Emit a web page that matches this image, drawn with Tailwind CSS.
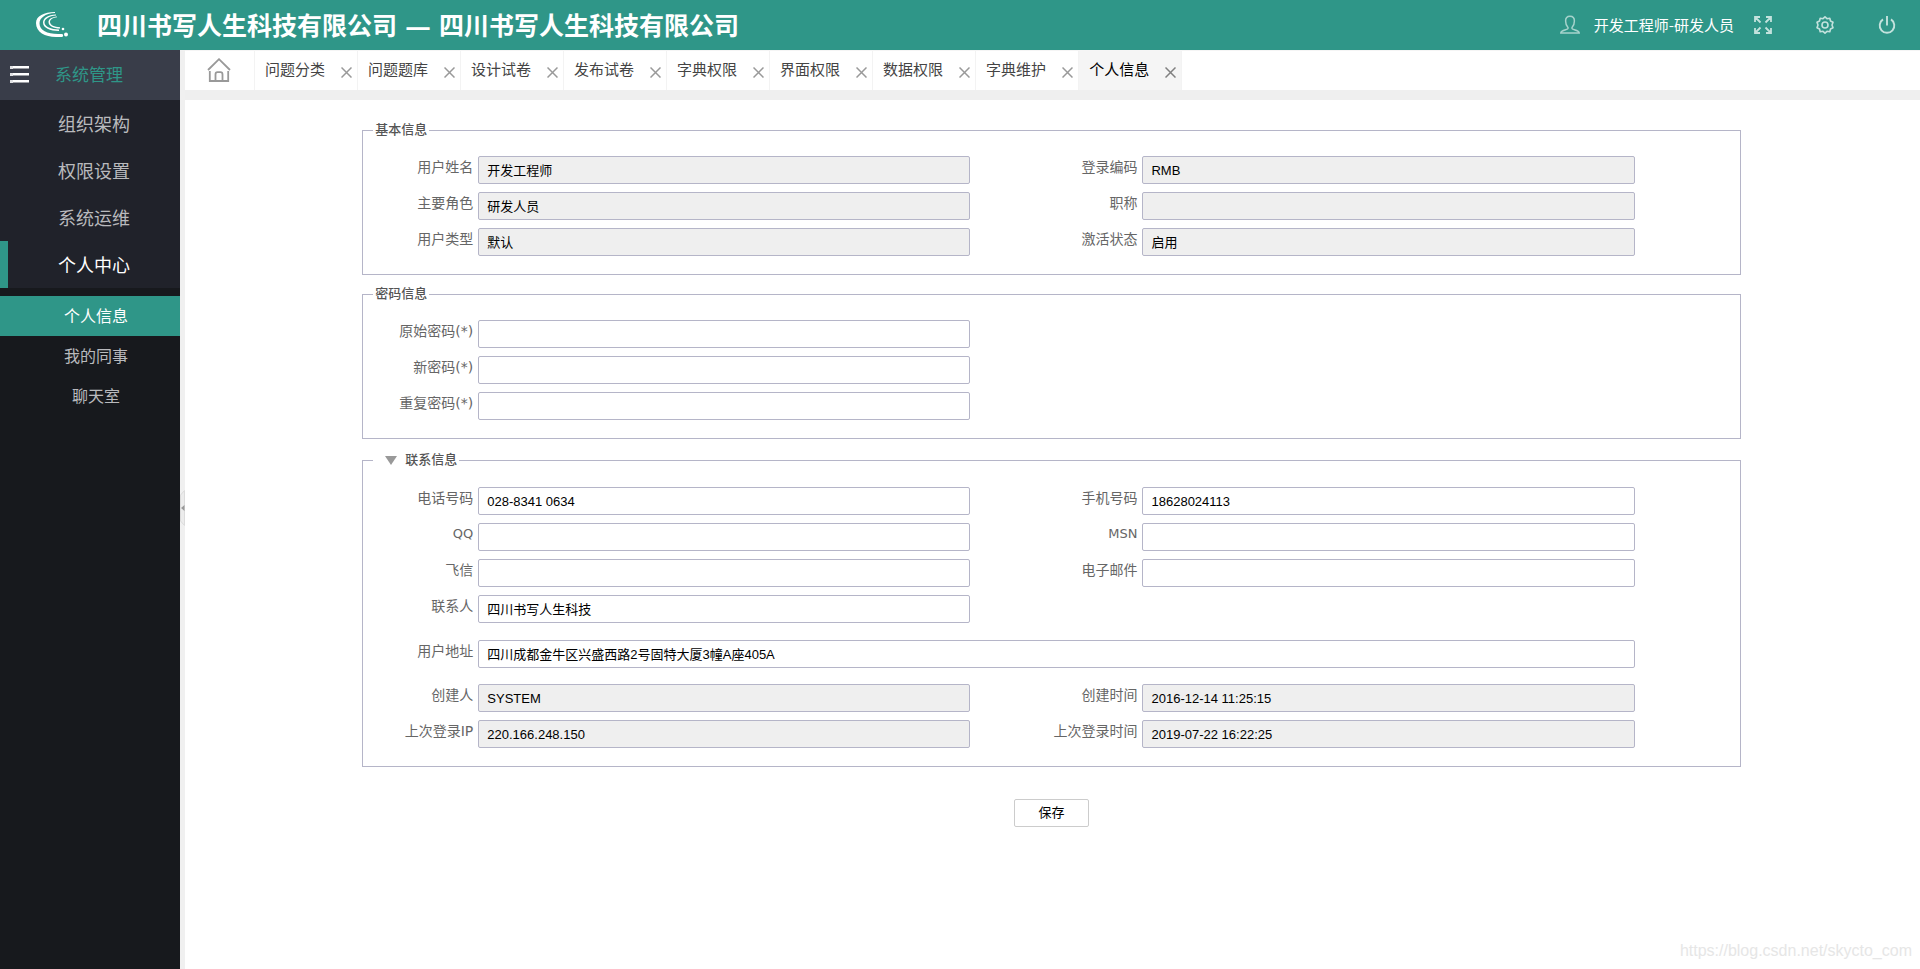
<!DOCTYPE html>
<html lang="zh-CN">
<head>
<meta charset="utf-8">
<meta name="viewport" content="width=device-width, initial-scale=1">
<title>个人信息</title>
<script src="https://cdn.jsdelivr.net/npm/@tailwindcss/browser@4"></script>
</head>
<body class="flex min-h-screen flex-col bg-white font-['Noto_Sans_CJK_SC',sans-serif]">

<header class="flex h-[50px] shrink-0 items-center bg-[#2f9688] pr-6 pl-9 text-white">
  <svg class="h-[26px] w-8 shrink-0" viewBox="0 0 32 26" fill="#fff" aria-hidden="true">
    <path d="M19 0C8 0 0 4 0 11c0 9 9 14 20 14h6c1.500 0 1.500-3 0-3h-4C11 22 3.500 18 3.500 11.500C3.500 6 9 1.500 19 1z"/>
    <path d="M20 2.500C12 3 7 6 7 10.500c0 5.500 7 8.500 16 8.500v-1.500C15 17.500 8.500 14.500 8.500 10.500C8.500 7 13 4 20 3.500z"/>
    <path d="M21 4.500c-5 .5-8.500 2.500-8.500 5.500c0 4 5 6.500 11.500 6.500v-1.300c-5.500 0-10-2.200-10-5.200c0-2.500 3-4.200 7-4.700z"/>
    <circle cx="27" cy="17" r="1.300"/><circle cx="30" cy="22.500" r="2"/>
  </svg>
  <h1 class="ml-[29px] font-['Noto_Sans','Noto_Sans_CJK_SC',sans-serif] text-[25px] leading-[50px] font-bold whitespace-nowrap">四川书写人生科技有限公司 <span class="mx-0.5">—</span> 四川书写人生科技有限公司</h1>
  <nav class="ml-auto flex items-center" aria-label="用户">
    <svg class="h-5 w-5" viewBox="0 0 20 20" fill="none" stroke="#a6d3cc" stroke-width="1.500" aria-hidden="true">
      <path d="M8 12.500C6.500 11 5.600 8.800 5.600 6C5.600 3 7.300 1.200 10 1.200S14.400 3 14.400 6c0 2.800-.9 5-2.400 6.500v1c0 1.200 7.200 1.500 7.200 4.500H.8c0-3 7.200-3.300 7.200-4.500z"/>
    </svg>
    <a href="#" class="ml-3.5 text-[15px] leading-5">开发工程师-研发人员</a>
    <button type="button" class="ml-5" aria-label="全屏">
      <svg class="block h-[18px] w-[18px]" viewBox="0 0 18 18" fill="none" stroke="#c3e2dd" stroke-width="1.800">
        <path d="M1 6V1h5M1.500 1.500L6.500 6.500M12 1h5v5M16.500 1.500L11.500 6.500M17 12v5h-5M16.500 16.500L11.500 11.500M6 17H1v-5M1.500 16.500L6.500 11.500"/>
      </svg>
    </button>
    <button type="button" class="ml-11" aria-label="设置">
      <svg class="block h-[18px] w-[18px]" viewBox="0 0 18 18" fill="none" stroke="#c3e2dd" stroke-width="1.600" stroke-linejoin="round">
        <path d="M9 .8L11 2.700L13.800 2.300L14.500 5L17 6.300L16 9L17 11.700L14.500 13L13.800 15.700L11 15.300L9 17.200L7 15.300L4.200 15.700L3.500 13L1 11.700L2 9L1 6.300L3.500 5L4.200 2.300L7 2.700z"/>
        <circle cx="9" cy="9" r="3"/>
      </svg>
    </button>
    <button type="button" class="ml-11" aria-label="退出">
      <svg class="block h-[18px] w-[18px]" viewBox="0 0 18 18" fill="none" stroke="#c3e2dd" stroke-width="1.900">
        <path d="M5 3.400A7.300 7.300 0 1 0 13 3.400M9 0v9.500"/>
      </svg>
    </button>
  </nav>
</header>

<div class="flex flex-1">
  <aside class="w-[180px] shrink-0 bg-[#17191d]">
    <div class="flex h-[50px] items-center bg-[#393d49] pb-0.5 pl-2.5">
      <button type="button" aria-label="收起菜单">
        <svg class="block h-5 w-5" viewBox="0 0 20 20" fill="#fff"><path d="M0 2h3v3H0zM0 9h3v3H0zM0 16h3v3H0z" opacity=".85"/><path d="M3 2h16v2.500H3zM3 9h16v2.500H3zM3 16h16v2.500H3z"/></svg>
      </button>
      <span class="ml-[25px] text-[17px] leading-6 text-[#2f9688]">系统管理</span>
    </div>
    <nav aria-label="系统管理">
      <div class="bg-[#20222a] text-center text-lg text-[#b9babd]">
        <a href="#" class="block border-l-8 border-transparent leading-[47px]">组织架构</a>
        <a href="#" class="block border-l-8 border-transparent leading-[47px]">权限设置</a>
        <a href="#" class="block border-l-8 border-transparent leading-[47px]">系统运维</a>
        <a href="#" class="block border-l-8 border-[#2f9688] leading-[47px] text-white">个人中心</a>
      </div>
      <div class="pt-2 text-center text-base text-[#b9babd]">
        <a href="#" class="block bg-[#2f9688] pb-0.5 pl-3 leading-[38px] text-white" aria-current="page">个人信息</a>
        <a href="#" class="block pb-0.5 pl-3 leading-[38px]">我的同事</a>
        <a href="#" class="block pb-0.5 pl-3 leading-[38px]">聊天室</a>
      </div>
    </nav>
  </aside>

  <div class="flex w-[5px] shrink-0 items-center bg-[#f0f0f0]">
    <button type="button" class="mb-[3px] flex h-9 w-full items-center justify-end" aria-label="折叠侧栏">
      <svg class="block h-9 w-[5px]" viewBox="0 0 5 36"><path d="M4.500 .5L.5 5v26l4 4.500z" fill="#ececec" stroke="#dcdcdc"/><path d="M4.500 15v6L1 18z" fill="#999"/></svg>
    </button>
  </div>

  <div class="flex min-w-0 flex-1 flex-col">
    <nav class="flex h-[50px] shrink-0 border-t border-b-10 border-t-[#f5f5f5] border-b-[#efefef] text-[15px] leading-9 whitespace-nowrap text-[#444]" aria-label="标签页">
      <a href="#" class="flex w-[70px] items-center justify-center border-r border-[#f3f3f3] pr-0.5 pb-0.5" aria-label="首页">
        <svg class="h-6 w-6" viewBox="0 0 24 24" fill="none" stroke="#999" stroke-width="1.800"><path d="M1 12L12 1.200L23 12M2.800 13v10h18.400V13M8.500 23v-6.500c0-1.600.7-2.300 2-2.300h3c1.300 0 2 .7 2 2.300V23"/></svg>
      </a>
      <div class="flex border-r border-[#f3f3f3] pr-[5px] pl-2.5"><a href="#">问题分类</a><button type="button" class="ml-4" aria-label="关闭问题分类"><svg class="mt-1 h-[11px] w-[11px]" viewBox="0 0 11 11" stroke="#999" stroke-width="1.500"><path d="M.5 .5l10 10M10.500 .5l-10 10"/></svg></button></div>
      <div class="flex border-r border-[#f3f3f3] pr-[5px] pl-2.5"><a href="#">问题题库</a><button type="button" class="ml-4" aria-label="关闭问题题库"><svg class="mt-1 h-[11px] w-[11px]" viewBox="0 0 11 11" stroke="#999" stroke-width="1.500"><path d="M.5 .5l10 10M10.500 .5l-10 10"/></svg></button></div>
      <div class="flex border-r border-[#f3f3f3] pr-[5px] pl-2.5"><a href="#">设计试卷</a><button type="button" class="ml-4" aria-label="关闭设计试卷"><svg class="mt-1 h-[11px] w-[11px]" viewBox="0 0 11 11" stroke="#999" stroke-width="1.500"><path d="M.5 .5l10 10M10.500 .5l-10 10"/></svg></button></div>
      <div class="flex border-r border-[#f3f3f3] pr-[5px] pl-2.5"><a href="#">发布试卷</a><button type="button" class="ml-4" aria-label="关闭发布试卷"><svg class="mt-1 h-[11px] w-[11px]" viewBox="0 0 11 11" stroke="#999" stroke-width="1.500"><path d="M.5 .5l10 10M10.500 .5l-10 10"/></svg></button></div>
      <div class="flex border-r border-[#f3f3f3] pr-[5px] pl-2.5"><a href="#">字典权限</a><button type="button" class="ml-4" aria-label="关闭字典权限"><svg class="mt-1 h-[11px] w-[11px]" viewBox="0 0 11 11" stroke="#999" stroke-width="1.500"><path d="M.5 .5l10 10M10.500 .5l-10 10"/></svg></button></div>
      <div class="flex border-r border-[#f3f3f3] pr-[5px] pl-2.5"><a href="#">界面权限</a><button type="button" class="ml-4" aria-label="关闭界面权限"><svg class="mt-1 h-[11px] w-[11px]" viewBox="0 0 11 11" stroke="#999" stroke-width="1.500"><path d="M.5 .5l10 10M10.500 .5l-10 10"/></svg></button></div>
      <div class="flex border-r border-[#f3f3f3] pr-[5px] pl-2.5"><a href="#">数据权限</a><button type="button" class="ml-4" aria-label="关闭数据权限"><svg class="mt-1 h-[11px] w-[11px]" viewBox="0 0 11 11" stroke="#999" stroke-width="1.500"><path d="M.5 .5l10 10M10.500 .5l-10 10"/></svg></button></div>
      <div class="flex border-r border-[#f3f3f3] pr-[5px] pl-2.5"><a href="#">字典维护</a><button type="button" class="ml-4" aria-label="关闭字典维护"><svg class="mt-1 h-[11px] w-[11px]" viewBox="0 0 11 11" stroke="#999" stroke-width="1.500"><path d="M.5 .5l10 10M10.500 .5l-10 10"/></svg></button></div>
      <div class="flex border-r border-[#f3f3f3] bg-[#f5f5f5] pr-[5px] pl-2.5 text-black"><a href="#" aria-current="page">个人信息</a><button type="button" class="ml-4" aria-label="关闭个人信息"><svg class="mt-1 h-[11px] w-[11px]" viewBox="0 0 11 11" stroke="#808080" stroke-width="1.500"><path d="M.5 .5l10 10M10.500 .5l-10 10"/></svg></button></div>
    </nav>

    <main class="flex-1 pt-5 pr-0.5">
      <form class="mx-auto flex w-4/5 flex-col gap-[9px] px-1 font-['DejaVu_Sans','Noto_Sans_CJK_SC',sans-serif] text-sm text-[#666]">
        <fieldset class="border border-[#b5b5c8] pr-12 pb-[18px]">
          <legend class="ml-2.5 px-0.5 text-[13px] leading-5 font-medium text-[#555]">基本信息</legend>
          <div class="grid grid-cols-2 gap-y-2 pt-4">
            <div class="flex pr-[57px]"><label for="name" class="w-[115px] shrink-0 pr-[5px] text-right leading-[22px]">用户姓名</label><input id="name" readonly value="开发工程师" class="h-7 min-w-0 flex-1 rounded-xs border border-[#b5b5c8] bg-[#efefef] px-2 pb-0.5 font-['Liberation_Sans','Noto_Sans_CJK_SC',sans-serif] text-[13px] text-black"></div>
            <div class="flex pr-[57px]"><label for="code" class="w-[115px] shrink-0 pr-[5px] text-right leading-[22px]">登录编码</label><input id="code" readonly value="RMB" class="h-7 min-w-0 flex-1 rounded-xs border border-[#b5b5c8] bg-[#efefef] px-2 font-['Liberation_Sans','Noto_Sans_CJK_SC',sans-serif] text-[13px] text-black"></div>
            <div class="flex pr-[57px]"><label for="role" class="w-[115px] shrink-0 pr-[5px] text-right leading-[22px]">主要角色</label><input id="role" readonly value="研发人员" class="h-7 min-w-0 flex-1 rounded-xs border border-[#b5b5c8] bg-[#efefef] px-2 pb-0.5 font-['Liberation_Sans','Noto_Sans_CJK_SC',sans-serif] text-[13px] text-black"></div>
            <div class="flex pr-[57px]"><label for="title" class="w-[115px] shrink-0 pr-[5px] text-right leading-[22px]">职称</label><input id="title" readonly class="h-7 min-w-0 flex-1 rounded-xs border border-[#b5b5c8] bg-[#efefef] px-2 text-[13px] text-black"></div>
            <div class="flex pr-[57px]"><label for="type" class="w-[115px] shrink-0 pr-[5px] text-right leading-[22px]">用户类型</label><input id="type" readonly value="默认" class="h-7 min-w-0 flex-1 rounded-xs border border-[#b5b5c8] bg-[#efefef] px-2 pb-0.5 font-['Liberation_Sans','Noto_Sans_CJK_SC',sans-serif] text-[13px] text-black"></div>
            <div class="flex pr-[57px]"><label for="state" class="w-[115px] shrink-0 pr-[5px] text-right leading-[22px]">激活状态</label><input id="state" readonly value="启用" class="h-7 min-w-0 flex-1 rounded-xs border border-[#b5b5c8] bg-[#efefef] px-2 pb-0.5 font-['Liberation_Sans','Noto_Sans_CJK_SC',sans-serif] text-[13px] text-black"></div>
          </div>
        </fieldset>

        <fieldset class="border border-[#b5b5c8] pr-12 pb-[18px]">
          <legend class="ml-2.5 px-0.5 text-[13px] leading-5 font-medium text-[#555]">密码信息</legend>
          <div class="grid w-1/2 gap-y-2 pt-4">
            <div class="flex pr-[57px]"><label for="old" class="w-[115px] shrink-0 pr-[5px] text-right leading-[22px]">原始密码(*)</label><input id="old" type="password" class="h-7 min-w-0 flex-1 rounded-xs border border-[#b5b5c8] bg-white px-2 text-[13px] text-black"></div>
            <div class="flex pr-[57px]"><label for="new" class="w-[115px] shrink-0 pr-[5px] text-right leading-[22px]">新密码(*)</label><input id="new" type="password" class="h-7 min-w-0 flex-1 rounded-xs border border-[#b5b5c8] bg-white px-2 text-[13px] text-black"></div>
            <div class="flex pr-[57px]"><label for="again" class="w-[115px] shrink-0 pr-[5px] text-right leading-[22px]">重复密码(*)</label><input id="again" type="password" class="h-7 min-w-0 flex-1 rounded-xs border border-[#b5b5c8] bg-white px-2 text-[13px] text-black"></div>
          </div>
        </fieldset>

        <fieldset class="border border-[#b5b5c8] pr-12 pb-[18px]">
          <legend class="ml-2.5 pr-0.5 text-[13px] leading-6 font-medium text-[#555]">
            <button type="button" class="flex items-center gap-2 pl-3" aria-expanded="true"><svg class="h-[9px] w-3" viewBox="0 0 12 9" fill="#999"><path d="M0 0h12L6 9z"/></svg>联系信息</button>
          </legend>
          <div class="grid grid-cols-2 gap-y-2 pt-[15px]">
            <div class="flex pr-[57px]"><label for="phone" class="w-[115px] shrink-0 pr-[5px] text-right leading-[22px]">电话号码</label><input id="phone" value="028-8341 0634" class="h-7 min-w-0 flex-1 rounded-xs border border-[#b5b5c8] bg-white px-2 font-['Liberation_Sans','Noto_Sans_CJK_SC',sans-serif] text-[13px] text-black"></div>
            <div class="flex pr-[57px]"><label for="mobile" class="w-[115px] shrink-0 pr-[5px] text-right leading-[22px]">手机号码</label><input id="mobile" value="18628024113" class="h-7 min-w-0 flex-1 rounded-xs border border-[#b5b5c8] bg-white px-2 font-['Liberation_Sans','Noto_Sans_CJK_SC',sans-serif] text-[13px] text-black"></div>
            <div class="flex pr-[57px]"><label for="qq" class="w-[115px] shrink-0 pr-[5px] text-right text-[13px] leading-[22px]">QQ</label><input id="qq" class="h-7 min-w-0 flex-1 rounded-xs border border-[#b5b5c8] bg-white px-2 text-[13px] text-black"></div>
            <div class="flex pr-[57px]"><label for="msn" class="w-[115px] shrink-0 pr-[5px] text-right text-[13px] leading-[22px]">MSN</label><input id="msn" class="h-7 min-w-0 flex-1 rounded-xs border border-[#b5b5c8] bg-white px-2 text-[13px] text-black"></div>
            <div class="flex pr-[57px]"><label for="fetion" class="w-[115px] shrink-0 pr-[5px] text-right leading-[22px]">飞信</label><input id="fetion" class="h-7 min-w-0 flex-1 rounded-xs border border-[#b5b5c8] bg-white px-2 text-[13px] text-black"></div>
            <div class="flex pr-[57px]"><label for="email" class="w-[115px] shrink-0 pr-[5px] text-right leading-[22px]">电子邮件</label><input id="email" type="email" class="h-7 min-w-0 flex-1 rounded-xs border border-[#b5b5c8] bg-white px-2 text-[13px] text-black"></div>
            <div class="flex pr-[57px]"><label for="contact" class="w-[115px] shrink-0 pr-[5px] text-right leading-[22px]">联系人</label><input id="contact" value="四川书写人生科技" class="h-7 min-w-0 flex-1 rounded-xs border border-[#b5b5c8] bg-white px-2 pb-0.5 font-['Liberation_Sans','Noto_Sans_CJK_SC',sans-serif] text-[13px] text-black"></div>
            <div class="col-span-2 mt-[9px] mb-2 flex pr-[57px]"><label for="address" class="w-[115px] shrink-0 pr-[5px] text-right leading-[22px]">用户地址</label><input id="address" value="四川成都金牛区兴盛西路2号固特大厦3幢A座405A" class="h-7 min-w-0 flex-1 rounded-xs border border-[#b5b5c8] bg-white px-2 pb-0.5 font-['Liberation_Sans','Noto_Sans_CJK_SC',sans-serif] text-[13px] text-black"></div>
            <div class="flex pr-[57px]"><label for="creator" class="w-[115px] shrink-0 pr-[5px] text-right leading-[22px]">创建人</label><input id="creator" readonly value="SYSTEM" class="h-7 min-w-0 flex-1 rounded-xs border border-[#b5b5c8] bg-[#efefef] px-2 font-['Liberation_Sans','Noto_Sans_CJK_SC',sans-serif] text-[13px] text-black"></div>
            <div class="flex pr-[57px]"><label for="created" class="w-[115px] shrink-0 pr-[5px] text-right leading-[22px]">创建时间</label><input id="created" readonly value="2016-12-14 11:25:15" class="h-7 min-w-0 flex-1 rounded-xs border border-[#b5b5c8] bg-[#efefef] px-2 font-['Liberation_Sans','Noto_Sans_CJK_SC',sans-serif] text-[13px] text-black"></div>
            <div class="flex pr-[57px]"><label for="ip" class="w-[115px] shrink-0 pr-[5px] text-right leading-[22px]">上次登录IP</label><input id="ip" readonly value="220.166.248.150" class="h-7 min-w-0 flex-1 rounded-xs border border-[#b5b5c8] bg-[#efefef] px-2 font-['Liberation_Sans','Noto_Sans_CJK_SC',sans-serif] text-[13px] text-black"></div>
            <div class="flex pr-[57px]"><label for="last" class="w-[115px] shrink-0 pr-[5px] text-right leading-[22px]">上次登录时间</label><input id="last" readonly value="2019-07-22 16:22:25" class="h-7 min-w-0 flex-1 rounded-xs border border-[#b5b5c8] bg-[#efefef] px-2 font-['Liberation_Sans','Noto_Sans_CJK_SC',sans-serif] text-[13px] text-black"></div>
          </div>
        </fieldset>

        <button type="submit" class="mt-[23px] h-7 w-[75px] self-center rounded-xs border border-[#ccc] bg-white text-[13px] text-black">保存</button>
      </form>
    </main>
  </div>
</div>

<p class="pointer-events-none absolute right-2 bottom-1.5 font-['Liberation_Sans',sans-serif] text-base leading-6 text-[#e6e6e6]">https://blog.csdn.net/skycto_com</p>
</body>
</html>
